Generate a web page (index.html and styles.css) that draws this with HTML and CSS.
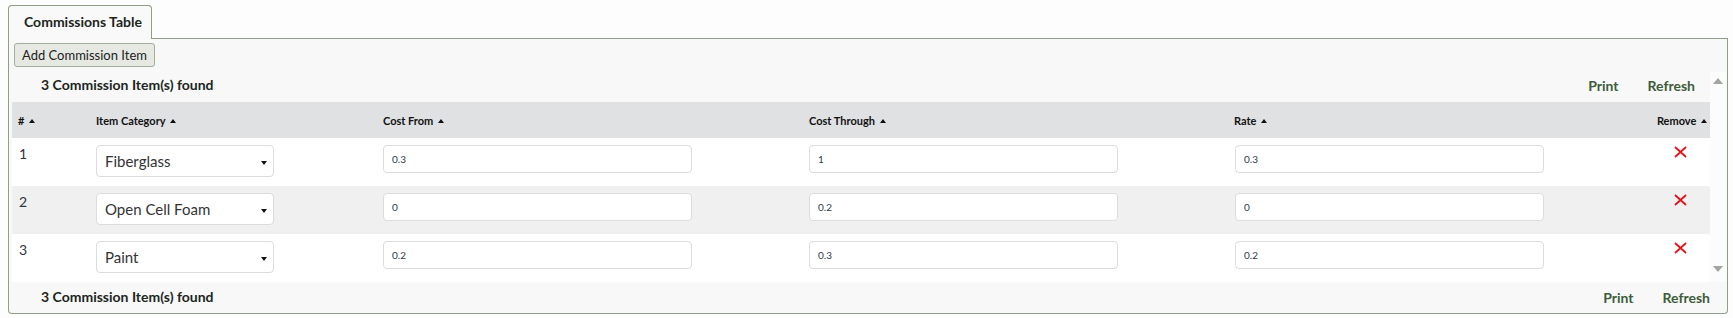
FILE: index.html
```html
<!DOCTYPE html>
<html lang="en">
<head>
    <meta charset="UTF-8">
    <title>Commissions Table</title>
    <link rel="stylesheet" href="styles.css">
</head>
<body>
    <div class="tabs">
        <div class="tab">Commissions Table</div>
        <div class="tab-fill"></div>
    </div>
    <div class="panel">
        <button class="add-btn">Add Commission Item</button>
        <div class="scroll">
            <div class="scroll-body">
                <div class="toolbar">
                    <span class="count">3 Commission Item(s) found</span>
                    <span class="links"><a href="#">Print</a><a href="#">Refresh</a></span>
                </div>
                <table class="grid">
                    <colgroup>
                        <col class="c-num"><col class="c-cat"><col class="c-from"><col class="c-thru"><col class="c-rate"><col class="c-rm">
                    </colgroup>
                    <thead>
                        <tr>
                            <th># <span class="sort"></span></th>
                            <th>Item Category <span class="sort"></span></th>
                            <th>Cost From <span class="sort"></span></th>
                            <th>Cost Through <span class="sort"></span></th>
                            <th>Rate <span class="sort"></span></th>
                            <th class="th-rm">Remove <span class="sort"></span></th>
                        </tr>
                    </thead>
                    <tbody>
                        <tr>
                            <td class="num">1</td>
                            <td><div class="select"><span>Fiberglass</span><span class="caret"></span></div></td>
                            <td><input class="field" type="text" value="0.3"></td>
                            <td><input class="field" type="text" value="1"></td>
                            <td><input class="field rate" type="text" value="0.3"></td>
                            <td class="rm"><svg class="rm-icon" width="13" height="12" viewBox="0 0 13 12"><path d="M1 1 L12 11 M12 1 L1 11" stroke="#e3121b" stroke-width="1.8" fill="none"/></svg></td>
                        </tr>
                        <tr class="alt">
                            <td class="num">2</td>
                            <td><div class="select"><span>Open Cell Foam</span><span class="caret"></span></div></td>
                            <td><input class="field" type="text" value="0"></td>
                            <td><input class="field" type="text" value="0.2"></td>
                            <td><input class="field rate" type="text" value="0"></td>
                            <td class="rm"><svg class="rm-icon" width="13" height="12" viewBox="0 0 13 12"><path d="M1 1 L12 11 M12 1 L1 11" stroke="#e3121b" stroke-width="1.8" fill="none"/></svg></td>
                        </tr>
                        <tr>
                            <td class="num">3</td>
                            <td><div class="select"><span>Paint</span><span class="caret"></span></div></td>
                            <td><input class="field" type="text" value="0.2"></td>
                            <td><input class="field" type="text" value="0.3"></td>
                            <td><input class="field rate" type="text" value="0.2"></td>
                            <td class="rm"><svg class="rm-icon" width="13" height="12" viewBox="0 0 13 12"><path d="M1 1 L12 11 M12 1 L1 11" stroke="#e3121b" stroke-width="1.8" fill="none"/></svg></td>
                        </tr>
                    </tbody>
                </table>
            </div>
            <div class="scrollbar">
                <span class="arrow-up"></span>
                <span class="arrow-down"></span>
            </div>
        </div>
        <div class="footer">
            <span class="count">3 Commission Item(s) found</span>
            <span class="links"><a href="#">Print</a><a href="#">Refresh</a></span>
        </div>
    </div>
</body>
</html>
```

FILE: styles.css
```css
body {
    background-color: #fdfdfd;
    font-family: Lato, "Open Sans", sans-serif;
    color: #222;
    margin: 5px 5px 5px 8px;
}

.tabs {
    display: flex;
    height: 34px;
}

.tab {
    box-sizing: border-box;
    width: 144px;
    height: 34px;
    border: 1px solid #8e9e88;
    border-bottom: none;
    border-radius: 4px 4px 0 0;
    background-color: #f9f9f9;
    font-size: 14px;
    font-weight: 700;
    color: #1c261c;
    padding: 7px 0 0 15px;
}

.tab-fill {
    flex: 1;
    border-bottom: 1px solid #8e9e88;
}

.panel {
    border: 1px solid #8e9e88;
    border-top: none;
    border-radius: 0 0 4px 4px;
    background-color: #f8f8f8;
    padding: 4px 0 0 3px;
}

.add-btn {
    display: block;
    margin-left: 2px;
    height: 24px;
    padding: 0 7px;
    font-family: Lato, sans-serif;
    font-size: 13px;
    color: #222;
    background-color: #e6e9e2;
    border: 1px solid #a3ae9f;
    border-radius: 3px;
}

.scroll {
    display: flex;
    margin-top: 5px;
}

.scroll-body {
    width: 1698px;
}

.toolbar,
.footer {
    display: flex;
    justify-content: space-between;
    align-items: center;
    padding: 0 15px 0 29px;
}

.toolbar {
    box-sizing: border-box;
    height: 30px;
    padding-bottom: 5px;
}

.footer {
    box-sizing: border-box;
    height: 31px;
    width: 1714px;
    padding-right: 16px;
    padding-bottom: 2px;
}

.count {
    font-size: 14px;
    font-weight: 700;
    color: #1c261c;
}

.links a {
    font-size: 14px;
    font-weight: 700;
    color: #3d5c3a;
    text-decoration: none;
    margin-left: 29px;
}

.grid {
    table-layout: fixed;
    width: 1698px;
    border-collapse: collapse;
}

.c-num { width: 78px; }
.c-cat { width: 287px; }
.c-from { width: 426px; }
.c-thru { width: 425px; }
.c-rate { width: 404px; }
.c-rm { width: 78px; }

.grid th {
    height: 36px;
    padding: 0 6px;
    background-color: #e0e1e3;
    font-size: 11px;
    font-weight: 700;
    color: #111;
    text-align: left;
    white-space: nowrap;
}

.grid th.th-rm {
    text-align: right;
    padding-right: 3px;
}

.sort {
    display: inline-block;
    width: 0;
    height: 0;
    margin-left: 2px;
    vertical-align: 2px;
    border-left: 3.5px solid transparent;
    border-right: 3.5px solid transparent;
    border-bottom: 4px solid #111;
}

.grid td {
    height: 48px;
    box-sizing: border-box;
    padding: 7px 6px 0;
    vertical-align: top;
    background-color: #fff;
}

.grid tr.alt td {
    background-color: #f0f0f0;
}

.grid td.num {
    font-size: 14px;
    color: #2c3540;
    padding-top: 7px;
    padding-left: 7px;
}

.select {
    box-sizing: border-box;
    display: flex;
    align-items: center;
    justify-content: space-between;
    width: 178px;
    height: 32px;
    padding: 0 6px 0 8px;
    background-color: #fff;
    border: 1px solid #dcdcdc;
    border-radius: 4px;
    font-size: 15px;
    color: #333;
}

.caret {
    width: 0;
    height: 0;
    margin-top: 3px;
    border-left: 3.5px solid transparent;
    border-right: 3.5px solid transparent;
    border-top: 4px solid #111;
}

.field {
    box-sizing: border-box;
    display: block;
    width: 309px;
    height: 28px;
    padding: 0 8px;
    font-family: Lato, sans-serif;
    font-size: 10px;
    color: #2d3a4a;
    background-color: #fff;
    border: 1px solid #dcdcdc;
    border-radius: 4px;
}

.field.rate {
    margin-left: 1px;
}

.grid td.rm {
    padding: 8px 0 0 18px;
}

.rm-icon {
    display: block;
    margin: 0 auto;
}

.scrollbar {
    width: 16px;
    display: flex;
    flex-direction: column;
    justify-content: space-between;
    align-items: center;
    padding: 6px 0 10px;
    background-color: #fcfcfc;
}

.arrow-up,
.arrow-down {
    width: 0;
    height: 0;
    border-left: 5px solid transparent;
    border-right: 5px solid transparent;
}

.arrow-up {
    border-bottom: 6px solid #a3a3a3;
}

.arrow-down {
    border-top: 6px solid #a3a3a3;
}
```
